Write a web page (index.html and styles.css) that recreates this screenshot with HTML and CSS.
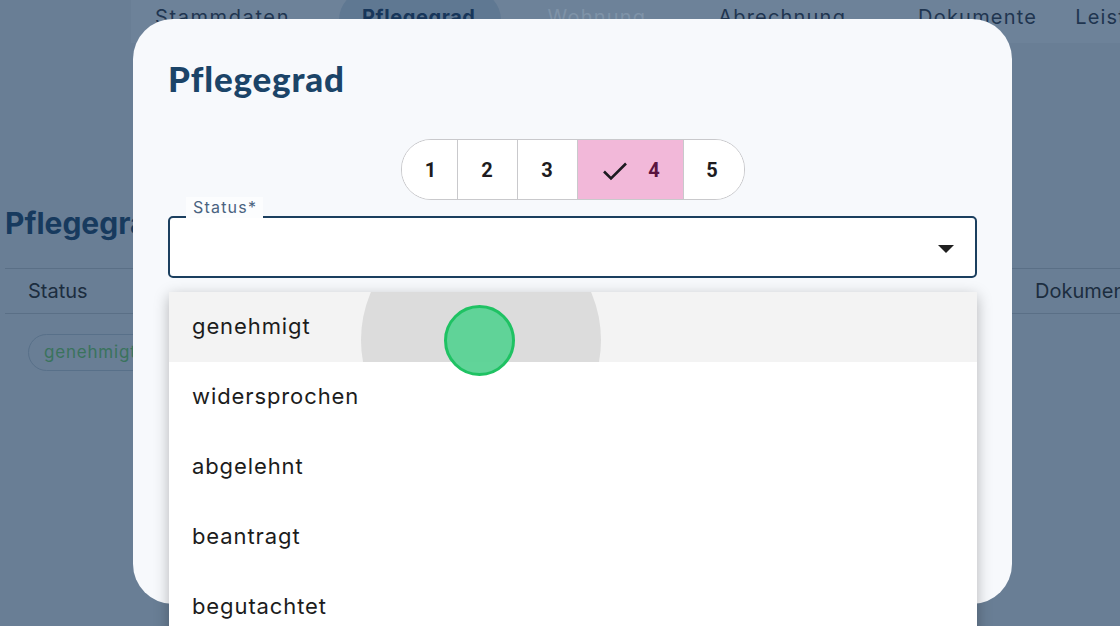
FILE: index.html
```html
<!DOCTYPE html>
<html lang="de">
<head>
    <meta charset="UTF-8">
    <meta name="viewport" content="width=device-width, initial-scale=1.0">
    <title>Pflegegrad</title>
    <link rel="stylesheet" href="styles.css">
</head>
<body>
    <div class="page">
        <nav class="tabbar">
            <span class="tab">Stammdaten</span>
            <span class="tab tab-active">Pflegegrad</span>
            <span class="tab tab-disabled">Wohnung</span>
            <span class="tab">Abrechnung</span>
            <span class="tab tab-docs">Dokumente</span>
            <span class="tab tab-cut">Leistungen</span>
        </nav>
        <h2 class="section-title">Pflegegrad</h2>
        <div class="table-head">
            <span class="col-status">Status</span>
            <span class="col-spacer"></span>
            <span class="col-docs">Dokumente</span>
        </div>
        <div class="table-row">
            <span class="chip">genehmigt</span>
        </div>
    </div>

    <div class="modal">
        <h1 class="modal-title">Pflegegrad</h1>
        <div class="segments">
            <button class="segment">1</button>
            <button class="segment">2</button>
            <button class="segment">3</button>
            <button class="segment segment-selected">
                <svg class="check" viewBox="0 0 26 20" width="26" height="20"><path d="M2 10.5 9 17.5 24 2.5" fill="none" stroke="#1d1b20" stroke-width="2.6"/></svg>
                4
            </button>
            <button class="segment segment-last">5</button>
        </div>
        <div class="field">
            <span class="field-label">Status*</span>
            <svg class="arrow" viewBox="0 0 16 8" width="16" height="8"><path d="M0 0h16L8 8z" fill="#1f1f1f"/></svg>
        </div>
    </div>

    <ul class="menu">
        <li class="menu-item menu-item-hover">
            <span class="ripple"></span>
            <span class="menu-text">genehmigt</span>
        </li>
        <li class="menu-item"><span class="menu-text">widersprochen</span></li>
        <li class="menu-item"><span class="menu-text">abgelehnt</span></li>
        <li class="menu-item"><span class="menu-text">beantragt</span></li>
        <li class="menu-item"><span class="menu-text">begutachtet</span></li>
    </ul>

    <div class="touch"></div>
</body>
</html>
```

FILE: styles.css
```css
body {
    margin: 0;
    width: 1120px;
    height: 626px;
    overflow: hidden;
    position: relative;
    background-color: #697e95;
    font-family: Inter, 'Liberation Sans', sans-serif;
    color: #1c2d3f;
}

/* page behind the dialog */
.tabbar {
    margin-left: 131px;
    height: 43px;
    background-color: #6d8299;
    display: flex;
    align-items: flex-start;
    padding-left: 24px;
    overflow: hidden;
}
.tab {
    font-size: 20px;
    letter-spacing: 1.2px;
    color: #1f3550;
    padding: 5px 0 0;
    margin-right: 72px;
    line-height: 24px;
    white-space: nowrap;
}
.tab:first-child {
    letter-spacing: 1.6px;
}
.tab-active {
    font-weight: 700;
    letter-spacing: 0.6px;
    color: #17365a;
    background-color: #5f7892;
    border-radius: 30px;
    padding: 15px 25px 30px 23px;
    margin: -10px 47px 0 -23px;
}
.tab-disabled {
    color: #7f93a8;
}
.tab-docs {
    margin-right: 38px;
}
.tab-cut {
    margin-right: 0;
}
.section-title {
    margin: 162px 0 0 5px;
    font-size: 30px;
    font-weight: 700;
    color: #173a5e;
    line-height: 36px;
}
.table-head {
    margin: 27px 0 0 5px;
    height: 44px;
    border-top: 1px solid #5a6f86;
    border-bottom: 1px solid #5a6f86;
    display: flex;
    align-items: center;
    font-size: 20px;
    color: #1c2d3f;
}
.col-status {
    padding-left: 23px;
}
.col-spacer {
    flex: 1;
}
.col-docs {
    border-left: 1px solid #5a6f86;
    height: 44px;
    line-height: 44px;
    padding-left: 42px;
    width: 85px;
    overflow: hidden;
    white-space: nowrap;
}
.table-row {
    padding: 20px 0 0 28px;
}
.chip {
    display: inline-block;
    border: 1px solid #587089;
    border-radius: 19px;
    padding: 0 15px;
    height: 35px;
    line-height: 35px;
    font-size: 17px;
    letter-spacing: 0.8px;
    color: #3a735d;
}

/* dialog */
.modal {
    position: absolute;
    left: 133px;
    top: 19px;
    width: 879px;
    height: 585px;
    box-sizing: border-box;
    padding: 0 35px;
    border-radius: 40px;
    background-color: #f7f9fc;
}
.modal-title {
    margin: 37px 0 0;
    font-family: Lato, sans-serif;
    font-size: 35px;
    font-weight: 900;
    letter-spacing: 0.8px;
    line-height: 44px;
    color: #1b4468;
}
.segments {
    margin: 39px auto 0;
    display: flex;
    width: fit-content;
    height: 59px;
    border: 1px solid #c9c9cc;
    border-radius: 30px;
    overflow: hidden;
    background-color: #fff;
}
.segment {
    border: none;
    border-right: 1px solid #c9c9cc;
    background: #fff;
    font-family: Roboto, sans-serif;
    font-size: 20px;
    font-weight: 700;
    color: #1d1b20;
    width: 60px;
    padding: 0;
    display: flex;
    align-items: center;
    justify-content: center;
}
.segments .segment:first-child {
    width: 56px;
    padding-left: 3px;
}
.segment-selected {
    width: 106px;
    background-color: #f2b8d9;
    color: #5b1440;
    gap: 20px;
    padding-left: 2px;
}
.check {
    margin-top: 3px;
}
.segment-last {
    border-right: none;
    width: 60px;
    padding-right: 3px;
}
.field {
    position: relative;
    margin-top: 16px;
    height: 58px;
    border: 2px solid #1b3f5f;
    border-radius: 5px;
    background-color: #fff;
}
.field-label {
    position: absolute;
    left: 16px;
    top: -21px;
    padding: 0 6px 0 7px;
    background-color: #fcfdfe;
    font-size: 16px;
    letter-spacing: 1.2px;
    line-height: 20px;
    color: #4a6380;
    height: 21px;
}
.arrow {
    position: absolute;
    right: 21px;
    top: 27px;
}

/* open select menu */
.menu {
    position: absolute;
    left: 169px;
    top: 292px;
    width: 808px;
    margin: 0;
    padding: 0;
    list-style: none;
    background-color: #fff;
    box-shadow: 0 4px 14px rgba(0, 0, 0, 0.28);
}
.menu-item {
    position: relative;
    height: 70px;
    display: flex;
    align-items: center;
    padding-left: 23px;
    font-size: 22px;
    letter-spacing: 0.9px;
    color: #1c1c1c;
    overflow: hidden;
}
.menu-item-hover {
    background-color: #f3f3f3;
}
.menu-text {
    position: relative;
    margin-top: -2px;
}
.ripple {
    position: absolute;
    left: 192px;
    top: -72px;
    width: 240px;
    height: 240px;
    border-radius: 50%;
    background-color: #dcdcdc;
}
.touch {
    position: absolute;
    left: 444px;
    top: 305px;
    width: 71px;
    height: 71px;
    box-sizing: border-box;
    border-radius: 50%;
    border: 3px solid #1fc263;
    background-color: rgba(92, 211, 150, 0.97);
}
```
